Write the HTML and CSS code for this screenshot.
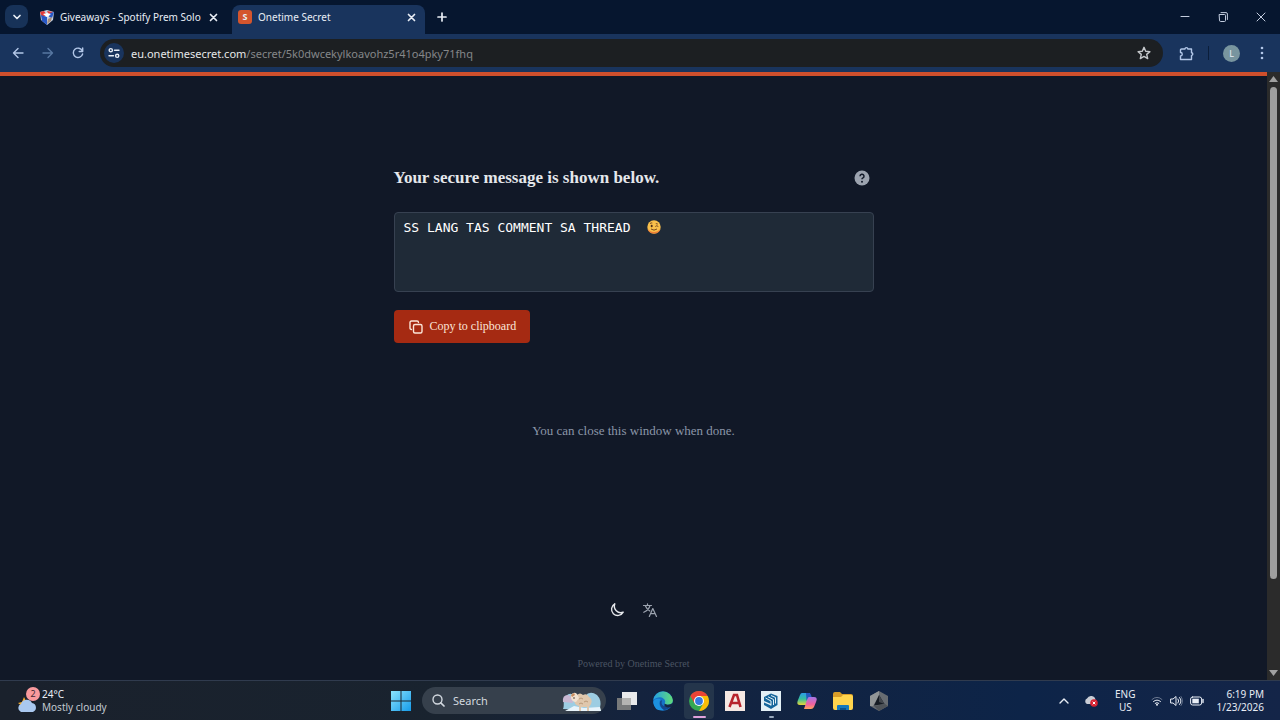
FILE: index.html
```html
<!DOCTYPE html>
<html lang="en">
<head>
<meta charset="utf-8">
<meta name="viewport" content="width=device-width, initial-scale=1">
<title>Onetime Secret</title>
<link rel="stylesheet" href="styles.css">
</head>
<body>
<div class="desktop">
  <header class="tabstrip">
    <button class="tab-search" aria-label="Search tabs"><svg width="10" height="10" viewBox="0 0 10 10"><path d="M2 3.5l3 3 3-3" class="line bold"/></svg></button>
    <div class="tab">
      <svg width="14" height="15" viewBox="0 0 14 15"><path d="M0 2l7-2 7 2-1 8-6 5-6-5z" fill="#c9d3e2"/><path d="M0 2l4-1 3 4-5 2zM7 1l6 1-4 3z" fill="#e23a37"/><path d="M1 5l6 2v8l-5-4zM10 3l4-1-2 6-3-1z" fill="#2858c6"/><path d="M3 4l4-1 4 1-4 3z" fill="#fff"/><path d="M8 9l4-2-1 4-4 3z" fill="#a88d78"/></svg>
      <span class="tab-title">Giveaways - Spotify Prem Solo</span>
      <button class="bare" aria-label="Close Giveaways tab"><svg width="9" height="9" viewBox="0 0 9 9"><path d="M1.500 1.500l6 6m0-6l-6 6" class="line bold"/></svg></button>
    </div>
    <div class="tab active">
      <span class="favicon">S</span>
      <span class="tab-title">Onetime Secret</span>
      <button class="bare" aria-label="Close Onetime Secret tab"><svg width="9" height="9" viewBox="0 0 9 9"><path d="M1.500 1.500l6 6m0-6l-6 6" class="line bold"/></svg></button>
    </div>
    <button class="bare new-tab" aria-label="New tab"><svg width="10" height="10" viewBox="0 0 10 10"><path d="M5 1v8M1 5h8" class="line bold"/></svg></button>
    <div class="window-controls">
      <button class="bare" aria-label="Minimize"><svg width="10" height="10" viewBox="0 0 10 10"><path d="M1 4.500h8" class="line thin"/></svg></button>
      <button class="bare" aria-label="Restore"><svg width="10" height="10" viewBox="0 0 10 10"><path d="M1.500 2.500h5q1 0 1 1v5q0 1-1 1h-4q-1 0-1-1zM3 .6h5q1.400 0 1.400 1.400v5.500" class="line thin"/></svg></button>
      <button class="bare" aria-label="Close"><svg width="10" height="10" viewBox="0 0 10 10"><path d="M1 1l8 8M9 1L1 9" class="line thin"/></svg></button>
    </div>
  </header>

  <nav class="toolbar" aria-label="Browser">
    <button class="bare nav-icon" aria-label="Back"><svg width="12" height="12" viewBox="0 0 12 12"><path d="M11 6H1.500M6 1.500L1.500 6 6 10.500" class="line"/></svg></button>
    <button class="bare nav-icon dim" aria-label="Forward"><svg width="12" height="12" viewBox="0 0 12 12"><path d="M1 6h9.500M6 1.500L10.500 6 6 10.500" class="line"/></svg></button>
    <button class="bare nav-icon" aria-label="Reload"><svg width="12" height="12" viewBox="0 0 12 12"><path d="M10.300 3.800A4.700 4.700 0 1 0 10.600 7M10.700 1v3.500H7.200" class="line"/></svg></button>
    <div class="omnibox">
      <button class="site-info" aria-label="Site information"><svg width="12" height="12" viewBox="0 0 12 12"><circle cx="2.800" cy="3.200" r="1.600" class="line"/><path d="M6.500 3.200h4.500M1 8.800h4.500" class="line"/><circle cx="9.200" cy="8.800" r="1.600" class="line"/></svg></button>
      <div class="url" role="textbox" aria-label="Address" aria-readonly="true"><span class="host">eu.onetimesecret.com</span>/secret/5k0dwcekylkoavohz5r41o4pky71fhq</div>
      <button class="bare star" aria-label="Bookmark"><svg width="14" height="14" viewBox="0 0 14 14"><path d="M7 1.300l1.700 3.900 4.200.4-3.200 2.800 1 4.200L7 10.400l-3.700 2.200 1-4.200L1.100 5.600l4.200-.4z" class="line"/></svg></button>
    </div>
    <div class="toolbar-end">
      <button class="bare nav-icon" aria-label="Extensions"><svg width="15" height="15" viewBox="0 0 15 15"><path d="M2.500 3H6a1.400 1.400 0 0 1 2.800 0H12.500v3.800a1.300 1.300 0 0 1 0 2.600V13.500H1.500V10a1.700 1.700 0 0 0 0-3.500V4q0-1 1-1z" class="line"/></svg></button>
      <span class="divider"></span>
      <button class="avatar" aria-label="Profile">L</button>
      <button class="bare nav-icon" aria-label="Menu"><svg width="4" height="14" viewBox="0 0 4 14" fill="currentColor"><circle cx="2" cy="2" r="1.300"/><circle cx="2" cy="7" r="1.300"/><circle cx="2" cy="12" r="1.300"/></svg></button>
    </div>
  </nav>

  <div class="viewport">
    <div class="page">
      <main class="secret">
        <div class="secret-head">
          <h1>Your secure message is shown below.</h1>
          <button class="bare help" aria-label="Help"><svg width="16" height="16" viewBox="0 0 16 16"><circle cx="8" cy="8" r="7.500" fill="currentColor"/><path d="M6 6.200a2 2 0 1 1 3 1.700q-1 .5-1 1.400" fill="none" stroke="#111827" stroke-width="1.500"/><circle cx="8" cy="11.700" r="1" fill="#111827"/></svg></button>
        </div>
        <div class="message-wrap">
          <textarea class="message" aria-label="Secret message" readonly>SS LANG TAS COMMENT SA THREAD</textarea>
          <svg class="wink" width="14" height="14" viewBox="0 0 14 14" role="img" aria-label="Winking face"><circle cx="7" cy="7" r="6.700" fill="#f9c04b"/><path d="M.5 8.500a6.700 6.700 0 0 0 13 0Q11 12 7 12 3 12 .5 8.500z" fill="#ee7d36"/><ellipse cx="4.700" cy="6" rx="1" ry="1.300" fill="#4b2d1c"/><path d="M8.300 6.500q1.400-1.500 3 0M3 3.600q1-1 2.300-.6M8.800 3.600l2 .4M4 9q3 2.300 6 0" fill="none" stroke="#6b3d1c" stroke-width=".9"/></svg>
        </div>
        <button class="copy"><svg width="14" height="14" viewBox="0 0 14 14"><rect x="4.500" y="4.500" width="8.500" height="8.500" rx="1.500" class="line"/><path d="M2.500 9.500Q1 9.500 1 8V2.500Q1 1 2.500 1H8q1.500 0 1.500 1.500" class="line"/></svg>Copy to clipboard</button>
        <p class="hint">You can close this window when done.</p>
      </main>
      <footer class="footer">
        <div class="footer-tools">
          <button class="bare moon" aria-label="Toggle dark mode"><svg width="16" height="16" viewBox="0 0 16 16"><path d="M5.800 1.800A6.200 6.200 0 1 0 14.200 10.200 6.500 6.500 0 0 1 5.800 1.800z" class="line"/></svg></button>
          <button class="bare lang" aria-label="Change language"><svg width="16" height="16" viewBox="0 0 16 16"><path d="M1.500 3.500h8M5.500 1.800v1.700M8 3.500Q6.800 8 1.800 10.300M3.300 3.800Q4.800 7.500 7.800 9M7.300 14.500l3.500-8 3.700 8M8.500 11.700h4.700" class="line medium"/></svg></button>
        </div>
        <p class="powered">Powered by Onetime Secret</p>
      </footer>
    </div>
    <div class="scrollbar" aria-hidden="true">
      <svg width="9" height="12" viewBox="0 0 9 12"><path d="M4.500 4L9 10H0z" fill="#a0a0a0"/></svg>
      <span class="thumb"></span>
      <svg class="down" width="9" height="12" viewBox="0 0 9 12"><path d="M4.500 8L9 2H0z" fill="#a0a0a0"/></svg>
    </div>
  </div>

  <footer class="taskbar">
    <button class="weather">
      <span class="weather-icon"><svg width="22" height="24" viewBox="0 0 22 24"><path d="M2 14l4-1 2-5 3 6-4 4z" fill="#f4ad31"/><path d="M5 23a4.300 4.300 0 0 1 0-8 6 6 0 0 1 11-1 4.700 4.700 0 0 1 1 9z" fill="#a9c8ef"/></svg><span class="badge">2</span></span>
      <span class="stack"><span>24°C</span><span class="soft">Mostly cloudy</span></span>
    </button>
    <div class="apps">
      <button class="app" aria-label="Start"><svg width="20" height="20" viewBox="0 0 20 20"><defs><linearGradient id="win" x2="1" y2="1"><stop stop-color="#8be3fd"/><stop offset="1" stop-color="#159bea"/></linearGradient></defs><path d="M0 0h9.500v9.500H0zM10.500 0H20v9.500h-9.500zM0 10.500h9.500V20H0zM10.500 10.500H20V20h-9.500z" fill="url(#win)"/></svg></button>
      <button class="search"><svg width="13" height="13" viewBox="0 0 13 13"><circle cx="5.500" cy="5.500" r="4.500" class="line"/><path d="M8.800 8.800L12 12" class="line bold"/></svg><span>Search</span>
        <svg class="sheep" width="40" height="22" viewBox="0 0 40 22"><path d="M1 19C3 15 0 8 4 6q5-5 9 1l10-1q5-6 12-1 5 5 3 13l1 3z" fill="#9dcde2"/><path d="M1 12q-1-7 5-7 5 1 5 8z" fill="#c9b7d1"/><path d="M3 21l9-5 10 2 16-1 1 4z" fill="#e8f4fb"/><path d="M12 9q0-3 3-4 3-3 6 0 4-2 6 2 4 2 2 7l-2 3v4h-2v-4h-6v4h-2v-5q-5-1-5-7z" fill="#dfc7ac"/><path d="M9 5q3-4 6-1l2 4-3 4q-4 0-5-4z" fill="#f2e2d0"/><path d="M9 5l3-2 1 2-3 2z" fill="#c88b5d"/><circle cx="12" cy="8" r=".8" fill="#43352e"/><path d="M17 9q2-2 4 0m1 3q2-2 4 0m-9 2q2-2 4 0" fill="none" stroke="#b99979"/></svg></button>
      <button class="app" aria-label="Task view"><svg width="20" height="20" viewBox="0 0 20 20"><path d="M5 1h15v13H5z" fill="#e9eaeb"/><path d="M0 7h14v12H0z" fill="#77797a"/><path d="M5 7h9v7H5z" fill="#b4b4b2"/></svg></button>
      <button class="app" aria-label="Edge"><svg width="20" height="20" viewBox="0 0 20 20"><defs><linearGradient id="edge" x2="1"><stop stop-color="#249fe3"/><stop offset="1" stop-color="#61dc78"/></linearGradient></defs><circle cx="10" cy="10" r="9.800" fill="#1673c8"/><path d="M.2 9A9.900 9.900 0 0 1 19.800 9c.4 4-3 5.500-7.300 4.500-1.500-.5-.5-1.500-.3-2.500C12.500 7 6 3.500 .2 9z" fill="url(#edge)"/><path d="M7.500 8Q4 15 11 19 2 21 .3 12-.2 7 7.500 8z" fill="#1c91df"/><path d="M9 9q-2 7 5.500 6.300 2.500-.2 4-1.800-2 5-7.500 5.500-5-3-4-8.500z" fill="#15468d"/><path d="M11.500 12.500q3 2.500 8.500-.5 0 2.500-1 3.500-5 2-7.500-.5z" fill="#152744"/></svg></button>
      <button class="app current" aria-label="Chrome"><svg width="20" height="20" viewBox="0 0 20 20"><circle cx="10" cy="10" r="10" fill="#34a853"/><path d="M1.340 5A10 10 0 0 1 18.660 5H10L5.670 12.500z" fill="#ea4335"/><path d="M18.660 5A10 10 0 0 1 10 20l4.330-7.500L10 5z" fill="#fbbc05"/><circle cx="10" cy="10" r="5" fill="#fff"/><circle cx="10" cy="10" r="3.900" fill="#3478df"/></svg></button>
      <button class="app" aria-label="AutoCAD"><svg width="20" height="20" viewBox="0 0 20 20"><path d="M0 0h20v20H0z" fill="#f5e8e3"/><path d="M4.500 16L9 4h3l3.500 12M6.500 12h8" fill="none" stroke="#b7232c" stroke-width="2.600"/></svg></button>
      <button class="app open" aria-label="SketchUp"><svg width="20" height="20" viewBox="0 0 20 20"><path d="M0 0h20v20H0z" fill="#e3f0f6"/><path d="M3 6l7-3.500L16.500 5v9L10 18l-7-4v-2.500l7 3V13l-7-3z" fill="#16669b"/><path d="M4.500 7L10 10v4.500M7 5.800l5.500 2.700v5.500M10 4.500l4.500 2v6" fill="none" stroke="#e3f0f6"/></svg></button>
      <button class="app" aria-label="Copilot"><svg width="20" height="18" viewBox="0 0 20 18"><defs><linearGradient id="co1" x2="0" y2="1"><stop stop-color="#2c9ce8"/><stop offset=".5" stop-color="#35bf9d"/><stop offset="1" stop-color="#e8d637"/></linearGradient><linearGradient id="co2" x2="0" y2="1"><stop stop-color="#a476e6"/><stop offset=".6" stop-color="#ef609f"/><stop offset="1" stop-color="#ffa35c"/></linearGradient></defs><path d="M5 1h8l-4 12H3Q-1 13 1 8l2-5q.7-2 2-2z" fill="url(#co1)"/><path d="M11 5h6q4 0 2 5l-2 5q-1 2-3 2H7z" fill="url(#co2)"/><path d="M9 1h3q1.500 0 2 2l.7 2H12q-1 0-1.500 1.500L9.500 9z" fill="#2459be"/></svg></button>
      <button class="app" aria-label="File Explorer"><svg width="20" height="18" viewBox="0 0 20 18"><path d="M0 2q0-2 2-2h5l2 2h9q2 0 2 2v6H0z" fill="#d89d28"/><path d="M0 5h8l2-2h8q2 0 2 2v11q0 2-2 2H2q-2 0-2-2z" fill="#ffd44d"/><path d="M4 18v-4q0-1 1-1h10q1 0 1 1v4z" fill="#1478bd"/><path d="M7 16h6v2H7z" fill="#0b518c"/></svg></button>
      <button class="app" aria-label="3D viewer"><svg width="18" height="20" viewBox="0 0 18 20"><path d="M9 0l9 5v10l-9 5-9-5V5z" fill="#686d72"/><path d="M9 0v5L3 15H0V5z" fill="#929697"/><path d="M9 4l5.500 9L4 14.500z" fill="#161c24"/><path d="M9 4v7l5.500 2z" fill="#42474d"/><path d="M4 15l11-2 3 2-9 5z" fill="#4e5358"/></svg></button>
    </div>
    <div class="tray">
      <button class="bare" aria-label="Show hidden icons"><svg width="10" height="8" viewBox="0 0 10 8"><path d="M1 6l4-4 4 4" class="line"/></svg></button>
      <button class="bare cloud" aria-label="OneDrive"><svg width="14" height="12" viewBox="0 0 14 12"><path d="M3 9a3 3 0 0 1 0-5.500 4.500 4.500 0 0 1 8.500 1.500V9z" fill="#c9cdd5"/><circle cx="10" cy="8" r="3.800" fill="#d82332"/><path d="M8.700 6.700l2.600 2.600m0-2.600L8.700 9.300" stroke="#fff"/></svg></button>
      <button class="stack center">ENG<span>US</span></button>
      <button class="bare status" aria-label="Network, sound and battery">
        <svg width="12" height="12" viewBox="0 0 12 12"><path d="M1 4.500q5-4.500 10 0" class="line thin faint"/><path d="M2.500 6.500q3.500-3 7 0M4.200 8.300q1.800-1.500 3.600 0" class="line thin"/><circle cx="6" cy="9.800" r="1" fill="currentColor"/></svg>
        <svg width="13" height="12" viewBox="0 0 13 12"><path d="M1 4h2l3-2.500v9L3 8H1zM8 4q1.500 2 0 4M9.500 2.500q3 3.500 0 7" class="line thin"/><path d="M11 1.500q3 4.500 0 9" class="line thin faint"/></svg>
        <svg width="14" height="10" viewBox="0 0 14 10"><rect x=".6" y="1" width="11" height="8" rx="2" class="line thin"/><path d="M2.300 2.700h6.500v4.600H2.300z" fill="currentColor"/><path d="M13 3.500v3" class="line"/></svg>
      </button>
      <button class="stack right"><span>6:19 PM</span><span>1/23/2026</span></button>
    </div>
  </footer>
</div>
</body>
</html>
```
FILE: styles.css
```css
* { box-sizing: border-box; }
body { margin: 0; background: #111827; font-family: "Noto Sans", "Open Sans", sans-serif; font-size: 10px; color: #e8edf5; }
button { font: inherit; color: inherit; border: 0; padding: 0; background: none; display: flex; align-items: center; justify-content: center; }
svg { display: block; flex: none; }
h1, p { margin: 0; }
.line { fill: none; stroke: currentColor; stroke-width: 1.4; stroke-linecap: round; stroke-linejoin: round; }
.thin { stroke-width: 1; }
.medium { stroke-width: 1.2; }
.bold { stroke-width: 1.7; }
.faint { opacity: .4; }
.desktop { display: flex; flex-direction: column; min-height: 100vh; }

.tabstrip { display: flex; height: 34px; padding-left: 5px; background: #06162f; }
.tab-search { width: 23px; height: 23px; margin: 5px 4px 0 0; border-radius: 8px; background: #173258; }
.tab { display: flex; align-items: center; gap: 6px; width: 200px; padding: 0 14px 0 8px; }
.tab.active { width: 193px; margin-top: 5px; padding: 0 9px 5px 6px; border-radius: 8px 8px 0 0; background: #19345d; }
.tab-title { flex: 1; white-space: nowrap; }
.favicon { width: 14px; height: 14px; border-radius: 3px; background: #d4552d; font-size: 9px; line-height: 14px; font-weight: 700; text-align: center; }
.new-tab { width: 34px; }
.window-controls { display: flex; gap: 28px; margin-left: auto; padding-right: 14px; color: #c3cddf; }

.toolbar { display: flex; align-items: center; height: 38px; padding: 0 16px 0 12px; background: #19345d; }
.nav-icon { color: #b2c7e8; }
.toolbar > .nav-icon { width: 12px; margin-right: 18px; }
.toolbar > .dim { color: #5777a1; }
.omnibox { flex: 1; display: flex; align-items: center; height: 28px; margin-left: -2px; padding: 0 12px 0 4px; border-radius: 14px; background: #1c1f22; }
.site-info { width: 20px; height: 20px; border-radius: 10px; background: #19345d; }
.url { flex: 1; margin-left: 7px; font-size: 11px; color: #858789; white-space: nowrap; }
.host { color: #e6e8e9; }
.star { color: #c4c7ca; }
.toolbar-end { display: flex; align-items: center; padding-left: 16px; }
.divider { width: 1px; height: 14px; margin: 0 14px; background: #0b1e3a; }
.avatar { width: 17px; height: 17px; margin-right: 20px; border-radius: 50%; background: #78959f; font-size: 9px; }

.viewport { flex: 1; display: flex; }
.page { flex: 1; display: flex; flex-direction: column; border-top: 4px solid #cf4f2c; background: #111827; }
.secret { width: 100%; max-width: 480px; margin: 90px auto 0; font-family: "Liberation Serif", serif; }
.secret-head { display: flex; align-items: center; justify-content: space-between; height: 24px; padding-right: 4px; }
h1 { font-size: 17px; line-height: 24px; color: #e5e7eb; }
.help { color: #9ca3af; }
.message-wrap { position: relative; margin: 22px 0 18px; }
.message { display: block; width: 100%; height: 80px; padding: 7px 9px; border: 1px solid #374151; border-radius: 4px; outline: 0; resize: none; background: #1f2a37; color: #fff; font-family: "DejaVu Sans Mono", monospace; font-size: 13px; line-height: 16px; }
.wink { position: absolute; left: 253px; top: 8px; }
.copy { gap: 7px; height: 33px; padding: 0 14px 0 15px; border-radius: 4px; background: #a52a12; color: #fbe5d8; font-size: 12px; }
.hint { margin-top: 80px; font-size: 13px; line-height: 16px; text-align: center; color: #8b96a8; }
.footer { margin-top: auto; padding-bottom: 8px; }
.footer-tools { display: flex; justify-content: center; gap: 17px; }
.moon { color: #e5e7eb; }
.lang { color: #9ca3af; }
.powered { margin-top: 38px; font-family: "Liberation Serif", serif; font-size: 10px; line-height: 16px; text-align: center; color: #4b5563; }
.scrollbar { display: flex; flex-direction: column; align-items: center; width: 13px; background: #2b2b2b; }
.thumb { width: 7px; height: 81%; margin-top: 3px; border-radius: 4px; background: #9e9e9e; }
.down { margin-top: auto; }

.taskbar { display: grid; grid-template-columns: 1fr auto 1fr; align-items: center; height: 40px; border-top: 1px solid #303b4e; background: linear-gradient(to right, #1a212c 0%, #19232f 35%, #14233e 50%, #0d2448 80%, #142548 100%); }
.weather { justify-self: start; gap: 4px; padding-left: 16px; }
.weather-icon { position: relative; }
.badge { position: absolute; right: -2px; top: -2px; width: 14px; height: 14px; border-radius: 50%; background: #f99a9d; color: #402832; font-size: 9px; line-height: 14px; text-align: center; }
.stack { display: flex; flex-direction: column; align-items: flex-start; line-height: 13px; }
.soft { color: #c2c9d2; }
.center { align-items: center; }
.right { align-items: flex-end; }
.apps { display: flex; align-items: center; gap: 6px; }
.app { position: relative; width: 30px; height: 36px; }
.current { border-radius: 4px; background: #24354b; }
.current::after, .open::after { content: ""; position: absolute; bottom: 1px; width: 5px; height: 2px; border-radius: 1px; background: #98a9bd; }
.current::after { width: 13px; background: #dfa2dc; }
.search { width: 184px; height: 27px; padding: 0 4px 0 10px; border-radius: 14px; background: #36404c; gap: 8px; color: #d2d8df; font-size: 11px; }
.sheep { margin-left: auto; }
.tray { display: flex; align-items: center; justify-self: end; padding-right: 16px; }
.cloud { margin: 0 17px 0 15px; }
.status { gap: 7px; margin: 0 13px 0 15px; }
```
